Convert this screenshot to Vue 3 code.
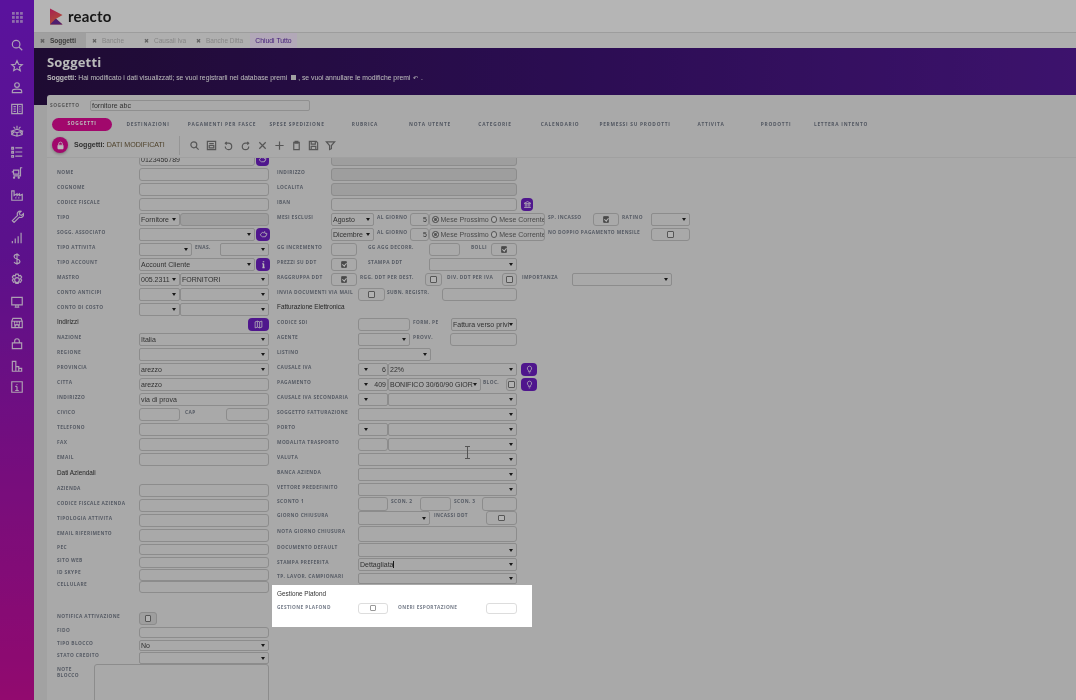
<script setup>
const lab = (t, w, pl = 0) => ({ k: 'l', t, w, pl })
const inp = (w, v = '', c = '') => ({ k: 'i', w, v, c })
const sel = (w, v = '', c = '') => ({ k: 's', w, v, c })
const chk = (w, on = false, c = '') => ({ k: 'c', w, on, c })
const btn = (w, ic) => ({ k: 'b', w, ic })
const rad = (w) => ({ k: 'r', w })
const row = (h, ...cells) => ({ h, cells })
const head = (t, h = 15) => ({ h, head: t, cells: [] })
const L = 82
const R = 54
const RW = 81

const leftRows = [
  row(15, lab('', L), inp(116, '0123456789'), btn(13, 'hand')),
  row(15, lab('NOME', L), inp(130)),
  row(15, lab('COGNOME', L), inp(130)),
  row(15, lab('CODICE FISCALE', L), inp(130)),
  row(15, lab('TIPO', L), sel(41, 'Fornitore'), inp(89, '', 'dis')),
  row(15, lab('SOGG. ASSOCIATO', L), sel(116), btn(14, 'hand')),
  row(15, lab('TIPO ATTIVITA', L), sel(53), lab('ENAS.', 28, 3), sel(49)),
  row(15, lab('TIPO ACCOUNT', L), sel(116, 'Account Cliente'), btn(14, 'info')),
  row(15, lab('MASTRO', L), sel(41, '005.2311'), sel(89, 'FORNITORI')),
  row(15, lab('CONTO ANTICIPI', L), sel(41), sel(89)),
  row(15, lab('CONTO DI COSTO', L), sel(41), sel(89)),
  { h: 15, head: 'Indirizzi', cells: [btn(21, 'map')], end: true },
  row(15, lab('NAZIONE', L), sel(130, 'Italia')),
  row(15, lab('REGIONE', L), sel(130)),
  row(15, lab('PROVINCIA', L), sel(130, 'arezzo')),
  row(15, lab('CITTA', L), inp(130, 'arezzo')),
  row(15, lab('INDIRIZZO', L), inp(130, 'via di prova')),
  row(15, lab('CIVICO', L), inp(41), lab('CAP', 46, 5), inp(43)),
  row(15, lab('TELEFONO', L), inp(130)),
  row(15, lab('FAX', L), inp(130)),
  row(15, lab('EMAIL', L), inp(130)),
  head('Dati Aziendali', 16),
  row(15, lab('AZIENDA', L), inp(130)),
  row(15, lab('CODICE FISCALE AZIENDA', L), inp(130)),
  row(15, lab('TIPOLOGIA ATTIVITA', L), inp(130)),
  row(15, lab('EMAIL RIFERIMENTO', L), inp(130)),
  row(13, lab('PEC', L), inp(130, '', 'low')),
  row(13, lab('SITO WEB', L), inp(130, '', 'low')),
  row(12, lab('ID SKYPE', L), inp(130, '', 'low')),
  row(12, lab('CELLULARE', L), inp(130, '', 'low')),
  row(18),
  row(15, lab('NOTIFICA ATTIVAZIONE', L), chk(18, false, 'dis')),
  row(13, lab('FIDO', L), inp(130, '', 'low')),
  row(13, lab('TIPO BLOCCO', L), sel(130, 'No', 'low')),
  row(12, lab('STATO CREDITO', L), sel(130, '', 'low'))
]

const rightRows = [
  row(15, inp(186, '', 'dis off')),
  row(15, lab('INDIRIZZO', R), inp(186, '', 'dis')),
  row(15, lab('LOCALITA', R), inp(186, '', 'dis')),
  row(15, lab('IBAN', R), inp(186), btn(12, 'bank')),
  row(15, lab('MESI ESCLUSI', R), sel(43, 'Agosto'), lab('AL GIORNO', 36, 3), inp(19, '5', 'num'), rad(116), lab('SP. INCASSO', 48, 3), chk(26, true), lab('RATINO', 32, 3), sel(39)),
  row(15, lab('', R), sel(43, 'Dicembre'), lab('AL GIORNO', 36, 3), inp(19, '5', 'num'), rad(116), lab('NO DOPPIO PAGAMENTO MENSILE', 106, 3), chk(39)),
  row(15, lab('GG INCREMENTO', R), inp(26), lab('GG AGG DECORR.', 72, 11), inp(31), lab('BOLLI', 31, 11), chk(26, true)),
  row(15, lab('PREZZI SU DDT', R), chk(26, true), lab('STAMPA DDT', 72, 11), sel(88)),
  row(15, lab('RAGGRUPPA DDT', R), chk(26, true), lab('RGG. DDT PER DEST.', 68, 3), chk(17), lab('DIV. DDT PER IVA', 60, 5), chk(15), lab('IMPORTANZA', 55, 5), sel(100)),
  row(15, lab('INVIA DOCUMENTI VIA MAIL', RW), chk(27), lab('SUBN. REGISTR.', 57, 2), inp(75)),
  head('Fatturazione Elettronica'),
  row(15, lab('CODICE SDI', RW), inp(52), lab('FORM. PE', 41, 3), sel(66, 'Fattura verso privi')),
  row(15, lab('AGENTE', RW), sel(52), lab('PROVV.', 40, 3), inp(67)),
  row(15, lab('LISTINO', RW), sel(73)),
  row(15, lab('CAUSALE IVA', RW), sel(30, '6', 'lead'), sel(129, '22%'), btn(16, 'bulb')),
  row(15, lab('PAGAMENTO', RW), sel(30, '409', 'lead'), sel(93, 'BONIFICO  30/60/90 GIOR'), lab('BLOC.', 25, 2), chk(11), btn(16, 'bulb')),
  row(15, lab('CAUSALE IVA SECONDARIA', RW), sel(30, '', 'lead'), sel(129)),
  row(15, lab('SOGGETTO FATTURAZIONE', RW), sel(159)),
  row(15, lab('PORTO', RW), sel(30, '', 'lead'), sel(129)),
  row(15, lab('MODALITA TRASPORTO', RW), inp(30), sel(129)),
  row(15, lab('VALUTA', RW), sel(159)),
  row(15, lab('BANCA AZIENDA', RW), sel(159)),
  row(15, lab('VETTORE PREDEFINITO', RW), sel(159)),
  row(14, lab('SCONTO 1', RW), inp(30), lab('SCON. 2', 32, 3), inp(31), lab('SCON. 3', 31, 3), inp(35)),
  row(14, lab('GIORNO CHIUSURA', RW), sel(72), lab('INCASSI DDT', 56, 4), chk(31)),
  row(18, lab('NOTA GIORNO CHIUSURA', RW), inp(159, '', 'tall')),
  row(14, lab('DOCUMENTO DEFAULT', RW), sel(159)),
  row(15, lab('STAMPA PREFERITA', RW), sel(159, 'Dettagliata', 'caret')),
  row(13, lab('TP. LAVOR. CAMPIONARI', RW), sel(159, '', 'low'))
]

const subTabs = [
  ['DESTINAZIONI', 72], ['PAGAMENTI PER FASCE', 76], ['SPESE SPEDIZIONE', 74], ['RUBRICA', 62],
  ['NOTA UTENTE', 68], ['CATEGORIE', 62], ['CALENDARIO', 68], ['PERMESSI SU PRODOTTI', 82],
  ['ATTIVITA', 70], ['PRODOTTI', 60], ['LETTERA INTENTO', 70]
]

const sideIcons = [
  'M10.5 17a6.5 6.5 0 1 1 0-13 6.5 6.5 0 0 1 0 13zM15.5 15.5L21 21',
  'M12 3l2.700 6 6.300.6-4.800 4.200 1.500 6.300L12 16.800 6.300 20l1.500-6.300L3 9.600l6.300-.6z',
  'M12 3a4 4 0 1 1 0 8 4 4 0 0 1 0-8zM4 20v-3c0-2 3-3 8-3s8 1 8 3v3z',
  'M3 4h18v16H3zM13 4v16M6 8h4M6 12h4M6 16h4M16 8h2M16 12h2M16 16h2',
  'M12 8V3M6 5l3 3M18 5l-3 3M3 12l9-3 9 3-9 3zM3 12v6l9 3 9-3v-6M12 15v6M7 13l-3 4M17 13l3 4',
  'M9 5h12M9 12h12M9 19h12M3 4h3v3H3zM3 11h3v3H3zM3 18h3v3H3z',
  'M21 3h-3v14H6M6 7h9v7H6zM3 10h3M8 20a1 1 0 1 0 0 .1M16 20a1 1 0 1 0 0 .1',
  'M3 21V5h4v8l5-3v3l4-3v3l5-2v10zM9 17h2M14 17h2',
  'M4 20l9-9a5 5 0 0 1 6-7l-3 3 1 3 3 1 3-3a5 5 0 0 1-7 6l-9 9z',
  'M4 21v-4M9 21v-8M14 21V9M19 21V3',
  'M16 7c-1-2-3-3-4-3-3 0-5 2-5 4s2 3 5 4 5 2 5 4-2 4-5 4c-2 0-4-1-5-3M12 2v20',
  'M12 8a4 4 0 1 1 0 8 4 4 0 0 1 0-8zM10 2h4l1 3 3-1 2 3-2 3 2 2-2 4-3-1-1 3h-4l-1-3-3 1-2-4 2-2-2-3 2-3 3 1z',
  'M3 4h18v13H3zM10 17v3M14 17v3M8 21h8',
  'M3 9l2-5h14l2 5v11H3zM3 9h18M8 9v3M16 9v3M12 9v3M9 20l-1-6 2 2 2-2 2 2 2-2-1 6',
  'M4 10h16v10H4zM8 10V7a4 4 0 0 1 8 0v3',
  'M4 21V4h6v17zM10 21v-8h5v8zM15 21v-5h5v5z',
  'M3 3h18v18H3zM12 7v1M12 11v7M9 11h3M9 18h6'
]

const tools = [
  'M10.5 17a6.5 6.5 0 1 1 0-13 6.5 6.5 0 0 1 0 13zM15.5 15.5L21 21',
  'M3 3h18v18H3zM7 8h10M7 12h10v5H7z',
  'M8 4L5 7l3 3M6 7h6a7 7 0 1 1-7 7',
  'M16 4l3 3-3 3M18 7h-6a7 7 0 1 0 7 7',
  'M5 5l14 14M19 5L5 19',
  'M12 3v18M3 12h18',
  'M6 5h12v16H6zM9 3h6v4H9z',
  'M3 3h15l3 3v15H3zM7 3v6h9V3M7 21v-7h10v7',
  'M3 4h18l-7 8v7l-4 2v-9z'
]
</script>

<template>
  <div class="app">
    <aside class="side">
      <svg class="grid-ic" viewBox="0 0 12 12"><g fill="currentColor"><rect v-for="n in 9" :key="n" :x="((n - 1) % 3) * 4.4" :y="Math.floor((n - 1) / 3) * 4.4" width="3" height="3" /></g></svg>
      <svg v-for="(d, i) in sideIcons" :key="i" class="side-ic" viewBox="0 0 24 24"><path :d="d" /></svg>
    </aside>

    <div class="main">
      <header class="top">
        <svg class="logo" viewBox="0 0 14 17">
          <defs>
            <linearGradient id="lg" x1="0" y1="0" x2="0.4" y2="1"><stop offset="0" stop-color="#e62a72" /><stop offset="1" stop-color="#f0704a" /></linearGradient>
          </defs>
          <path d="M0 0l13.500 7-7 4 7 6H0z" fill="url(#lg)" />
          <path d="M0 17l5-5 1.500-1 7 6z" fill="#6b2a9a" />
        </svg>
        <span class="brand">reacto</span>
      </header>

      <nav class="tabs">
        <span class="tab on"><i>✖</i>Soggetti</span>
        <span class="tab"><i>✖</i>Banche</span>
        <span class="tab"><i>✖</i>Causali Iva</span>
        <span class="tab ditta"><i>✖</i>Banche Ditta</span>
        <span class="tab close">Chiudi Tutto</span>
      </nav>

      <section class="banner">
        <h1>Soggetti</h1>
        <p><b>Soggetti:</b> Hai modificato i dati visualizzati; se vuoi registrarli nel database premi <span class="mini"></span>, se vuoi annullare le modifiche premi <span class="mini2">↶</span> .</p>
      </section>

      <section class="panel">
        <div class="who">
          <span class="who-l">SOGGETTO</span>
          <span class="who-i">fornitore abc</span>
        </div>
        <div class="subtabs">
          <span class="pill">SOGGETTI</span>
          <span v-for="t in subTabs" :key="t[0]" class="st" :style="{ width: t[1] + 'px' }">{{ t[0] }}</span>
        </div>
        <div class="toolbar">
          <span class="lock">
            <svg viewBox="0 0 24 24"><path d="M7 11V8a5 5 0 0 1 10 0v3" /><rect x="5" y="11" width="14" height="10" rx="1" fill="#fff" /></svg>
          </span>
          <span class="tb-t"><b>Soggetti:</b> DATI MODIFICATI</span>
          <span class="tb-sep"></span>
          <svg v-for="(d, i) in tools" :key="i" class="tool" viewBox="0 0 24 24"><path :d="d" /></svg>
        </div>

        <div class="body">
          <div class="cols">
            <div class="col lc">
              <template v-for="(r, i) in leftRows" :key="'l' + i">
                <div class="row" :class="{ end: r.end }" :style="{ height: r.h + 'px' }">
                  <span v-if="r.head" class="hd up">{{ r.head }}</span>
                  <template v-for="(c, j) in r.cells" :key="j">
                    <span v-if="c.k === 'l'" class="lbl" :style="{ width: c.w + 'px', paddingLeft: c.pl + 'px' }">{{ c.t }}</span>
                    <span v-else-if="c.k === 'i'" class="fld" :class="c.c" :style="{ width: c.w + 'px' }">{{ c.v }}</span>
                    <span v-else-if="c.k === 's'" class="fld sel" :class="c.c" :style="{ width: c.w + 'px' }">{{ c.v }}</span>
                    <span v-else-if="c.k === 'c'" class="fld chk" :class="c.c" :style="{ width: c.w + 'px' }"><i class="box"></i></span>
                    <span v-else-if="c.k === 'b'" class="pbtn" :style="{ width: c.w + 'px' }">
                      <svg v-if="c.ic === 'hand'" viewBox="0 0 24 24"><path d="M3 13l6-7 3 2 3-4 1 5h5v3h-1v2h-1v2h-2v2H9z" /></svg>
                      <svg v-else-if="c.ic === 'info'" viewBox="0 0 24 24"><path d="M12 3v3M12 10v10M9 10h3M9 20h6" stroke-width="4" /></svg>
                      <svg v-else viewBox="0 0 24 24"><path d="M3 5l6-2 6 2 6-2v16l-6 2-6-2-6 2zM9 3v16M15 5v16" /></svg>
                    </span>
                  </template>
                </div>
              </template>
              <div class="note">
                <span class="lbl note-l">NOTE BLOCCO</span>
                <span class="fld area"></span>
              </div>
            </div>

            <div class="col">
              <template v-for="(r, i) in rightRows" :key="'r' + i">
                <div class="row" :style="{ height: r.h + 'px' }">
                  <span v-if="r.head" class="hd up">{{ r.head }}</span>
                  <template v-for="(c, j) in r.cells" :key="j">
                    <span v-if="c.k === 'l'" class="lbl" :style="{ width: c.w + 'px', paddingLeft: c.pl + 'px' }">{{ c.t }}</span>
                    <span v-else-if="c.k === 'i'" class="fld" :class="c.c" :style="{ width: c.w + 'px' }">{{ c.v }}</span>
                    <span v-else-if="c.k === 's'" class="fld sel" :class="c.c" :style="{ width: c.w + 'px' }"><span class="val">{{ c.v }}</span></span>
                    <span v-else-if="c.k === 'c'" class="fld chk" :class="{ on: c.on }" :style="{ width: c.w + 'px' }"><i class="box"></i></span>
                    <span v-else-if="c.k === 'r'" class="fld radios" :style="{ width: c.w + 'px' }"><i class="rd sel-r"></i>Mese Prossimo<i class="rd"></i>Mese Corrente</span>
                    <span v-else-if="c.k === 'b'" class="pbtn ml" :style="{ width: c.w + 'px' }">
                      <svg v-if="c.ic === 'bank'" viewBox="0 0 24 24"><path d="M3 9l9-5 9 5zM6 10v8M10 10v8M14 10v8M18 10v8M3 20h18" /></svg>
                      <svg v-else viewBox="0 0 24 24"><path d="M12 3a6 6 0 0 1 3 11v3H9v-3a6 6 0 0 1 3-11zM10 21h4" /></svg>
                    </span>
                  </template>
                </div>
              </template>

              <div class="spot">
                <span class="hd">Gestione Plafond</span>
                <div class="row spot-row">
                  <span class="lbl" :style="{ width: RW + 'px' }">GESTIONE PLAFOND</span>
                  <span class="fld chk w30"><i class="box"></i></span>
                  <span class="lbl oneri">ONERI ESPORTAZIONE</span>
                  <span class="fld w31"></span>
                </div>
              </div>
            </div>
          </div>
        </div>
      </section>
    </div>

    <div class="shade"></div>
    <svg class="ibeam" viewBox="0 0 7 13"><path d="M1 .5h5M3.5.5v12M1 12.5h5" /></svg>
  </div>
</template>

<style scoped>
.app {
  position: relative;
  display: flex;
  width: 1076px;
  height: 700px;
  overflow: hidden;
  font-family: "Liberation Sans", Arial, sans-serif;
  font-size: 7px;
  color: #444;
  background: #e8e8e8;
  filter: blur(0.4px);
}
.shade {
  position: absolute;
  inset: 0;
  background: rgba(0, 0, 0, 0.27);
  z-index: 10;
}
.ibeam {
  position: absolute;
  left: 464px;
  top: 446px;
  width: 7px;
  height: 13px;
  z-index: 12;
  fill: none;
  stroke: #555;
  stroke-width: 1;
}

.side {
  width: 34px;
  flex: none;
  display: flex;
  flex-direction: column;
  align-items: center;
  background: linear-gradient(180deg, #7c1ad8 0%, #7d18c0 35%, #c80e98 100%);
  color: #fff;
  padding-top: 12px;
  box-sizing: border-box;
}
.grid-ic {
  width: 11px;
  height: 11px;
  margin-bottom: 15px;
  opacity: 0.55;
}
.side-ic {
  width: 14px;
  height: 14px;
  flex: none;
  margin-bottom: 7.400px;
  fill: none;
  stroke: #fff;
  stroke-width: 2;
  opacity: 0.85;
}

.main {
  flex: 1;
  min-width: 0;
  display: flex;
  flex-direction: column;
  background: #dfdfdf;
}
.top {
  height: 32px;
  flex: none;
  display: flex;
  align-items: center;
  gap: 5px;
  padding-left: 16px;
  background: #f8f8f8;
  border-bottom: 1px solid #d8d8d8;
}
.logo {
  width: 13px;
  height: 17px;
}
.brand {
  font-family: Lato, "Liberation Sans", sans-serif;
  font-size: 15px;
  font-weight: 700;
  color: #222;
  letter-spacing: 0.2px;
}

.tabs {
  height: 15px;
  flex: none;
  display: flex;
  background: #f0f0f0;
}
.tab {
  display: flex;
  align-items: center;
  color: #b8b8b8;
  font-size: 6.500px;
  white-space: nowrap;
  width: 52px;
  padding-left: 6px;
  box-sizing: border-box;
}
.tab i {
  font-style: normal;
  margin-right: 5px;
  color: #888;
  font-size: 6px;
}
.tab.on {
  background: #dcdcdc;
  color: #555;
  font-weight: 700;
}
.tab.ditta {
  width: 60px;
  padding-left: 6px;
}
.tab.close {
  width: 47px;
  justify-content: center;
  padding: 0;
  background: #f4e6fc;
  color: #5a25a5;
  font-size: 6.800px;
}

.banner {
  height: 57px;
  flex: none;
  padding: 5px 13px 0;
  box-sizing: border-box;
  background: linear-gradient(90deg, #2a1045 0%, #3b1270 50%, #541a96 100%);
  color: #fff;
}
.banner h1 {
  margin: 0;
  font-family: "Open Sans", sans-serif;
  font-size: 13px;
  line-height: 18px;
  font-weight: 700;
  letter-spacing: 0.2px;
}
.banner p {
  margin: 2px 0 0;
  font-size: 6.800px;
  line-height: 10px;
}
.mini {
  display: inline-block;
  width: 5px;
  height: 5px;
  background: #ddd;
  margin: 0 2px;
}
.mini2 {
  font-size: 6px;
  margin: 0 1px;
}

.panel {
  flex: 1;
  min-height: 0;
  margin: -10px 0 0 13px;
  background: #e8e8e8;
  border-radius: 3px 0 0 0;
  display: flex;
  flex-direction: column;
}
.who {
  height: 20px;
  flex: none;
  display: flex;
  align-items: center;
  padding-left: 3px;
}
.who-l {
  width: 40px;
  font-family: "Open Sans", sans-serif;
  font-weight: 700;
  font-size: 4.800px;
  letter-spacing: 0.5px;
  color: #777;
}
.who-i {
  width: 220px;
  height: 11px;
  line-height: 10px;
  box-sizing: border-box;
  border: 1px solid #c4c4c4;
  border-radius: 2px;
  padding-left: 1px;
  color: #444;
}
.subtabs {
  height: 18px;
  flex: none;
  display: flex;
  align-items: center;
  padding-left: 5px;
  font-family: "Open Sans", sans-serif;
  font-weight: 700;
  font-size: 4.800px;
  letter-spacing: 0.75px;
  color: #6f7684;
}
.pill {
  width: 60px;
  height: 13px;
  line-height: 11px;
  margin-top: 1px;
  text-align: center;
  background: #dd0c94;
  border-radius: 7px;
  color: #fff;
  flex: none;
}
.st {
  flex: none;
  text-align: center;
  white-space: nowrap;
}
.toolbar {
  height: 25px;
  flex: none;
  display: flex;
  align-items: center;
  padding-left: 5px;
  border-bottom: 1px solid #dcdcdc;
  box-sizing: border-box;
}
.lock {
  width: 16px;
  height: 16px;
  border-radius: 50%;
  background: #dd0c94;
  display: flex;
  align-items: center;
  justify-content: center;
  box-shadow: 0 1px 3px rgba(0, 0, 0, 0.3);
}
.lock svg {
  width: 9px;
  height: 9px;
  fill: none;
  stroke: #fff;
  stroke-width: 2;
}
.tb-t {
  width: 104px;
  margin-left: 6px;
  font-size: 7.100px;
  color: #6b5a3a;
  white-space: nowrap;
}
.tb-t b {
  color: #444;
}
.tb-sep {
  width: 1px;
  height: 19px;
  background: #ccc;
  margin-right: 9px;
  margin-left: 1px;
}
.tool {
  width: 11px;
  height: 11px;
  margin-right: 6px;
  flex: none;
  fill: none;
  stroke: #777;
  stroke-width: 2.600;
}

.body {
  flex: 1;
  min-height: 0;
  overflow: hidden;
  padding-left: 10px;
}
.cols {
  display: flex;
  gap: 8px;
  margin-top: -6px;
}
.col {
  width: 212px;
  flex: none;
}
.row {
  display: flex;
  align-items: center;
  white-space: nowrap;
}
.row.end {
  justify-content: space-between;
}
.lbl {
  flex: none;
  box-sizing: border-box;
  font-family: "Open Sans", sans-serif;
  font-weight: 700;
  font-size: 4.800px;
  letter-spacing: 0.38px;
  color: #767d8a;
  white-space: nowrap;
  transform: translateY(-3px);
}
.hd {
  font-size: 6.400px;
  color: #333;
}
.hd.up {
  transform: translateY(-3px);
}
.fld {
  flex: none;
  position: relative;
  display: block;
  height: 13.400px;
  line-height: 12px;
  box-sizing: border-box;
  border: 1px solid #c0c0c0;
  border-radius: 3px;
  padding-left: 1px;
  overflow: hidden;
  color: #444;
}
.fld.low {
  height: 11.500px;
  line-height: 10px;
}
.fld.tall {
  height: 16px;
}
.fld.dis {
  background: #d9d9d9;
}
.fld.off {
  margin-left: 54px;
}
.fld.num {
  text-align: right;
  padding-right: 1px;
}
.sel {
  border-radius: 2px;
  padding-right: 8px;
}
.sel::after {
  content: "";
  position: absolute;
  right: 3px;
  top: 4.500px;
  border-left: 2.500px solid transparent;
  border-right: 2.500px solid transparent;
  border-top: 3.500px solid #222;
}
.sel.low::after {
  top: 3.500px;
}
.sel.lead::after {
  right: auto;
  left: 5px;
}
.sel.lead .val {
  position: absolute;
  right: 1px;
}
.sel.caret .val {
  border-right: 1px solid #222;
}
.chk {
  display: flex;
  align-items: center;
  justify-content: center;
  padding: 0;
}
.chk.dis {
  background: #d9d9d9;
}
.box {
  position: relative;
  width: 6.500px;
  height: 6.500px;
  box-sizing: border-box;
  border: 1px solid #777;
  border-radius: 1px;
  background: #f4f4f4;
}
.chk.on .box {
  background: #666;
}
.chk.on .box::after {
  content: "";
  position: absolute;
  left: 1.300px;
  top: -0.200px;
  width: 1.500px;
  height: 3px;
  border: solid #fff;
  border-width: 0 1px 1px 0;
  transform: rotate(40deg);
}
.radios {
  display: flex;
  align-items: center;
  padding: 0 0 0 2px;
  gap: 2px;
  font-size: 7px;
  color: #666;
  white-space: nowrap;
}
.rd {
  width: 6.500px;
  height: 6.500px;
  flex: none;
  box-sizing: border-box;
  border: 1px solid #777;
  border-radius: 50%;
  background: #f4f4f4;
}
.rd.sel-r {
  background: #777;
  box-shadow: inset 0 0 0 1px #f4f4f4;
}
.pbtn {
  flex: none;
  height: 13px;
  margin-left: 1px;
  border-radius: 4px;
  background: #6d1fc2;
  display: flex;
  align-items: center;
  justify-content: center;
}
.pbtn.ml {
  margin-left: 4px;
}
.pbtn svg {
  width: 9px;
  height: 9px;
  fill: none;
  stroke: #fff;
  stroke-width: 2;
}
.note {
  display: flex;
  align-items: flex-start;
}
.note-l {
  width: 37px;
  white-space: normal;
  line-height: 6px;
  margin-top: 5px;
}
.area {
  width: 175px;
  height: 60px;
}
.spot {
  position: relative;
  z-index: 11;
  width: 260px;
  height: 42px;
  margin-left: -5px;
  box-sizing: border-box;
  padding: 5px 5px 0;
  background: #fff;
}
.spot .hd {
  display: block;
  line-height: 8px;
}
.spot-row {
  height: 12px;
  margin-top: 4px;
}
.spot .lbl {
  transform: translateY(-1px);
}
.spot .fld {
  height: 11px;
  border-color: #ddd;
}
.spot .box {
  background: #fff;
  border-color: #999;
}
.oneri {
  width: 98px;
  padding-left: 10px;
}
.w30 {
  width: 30px;
}
.w31 {
  width: 31px;
}
</style>
